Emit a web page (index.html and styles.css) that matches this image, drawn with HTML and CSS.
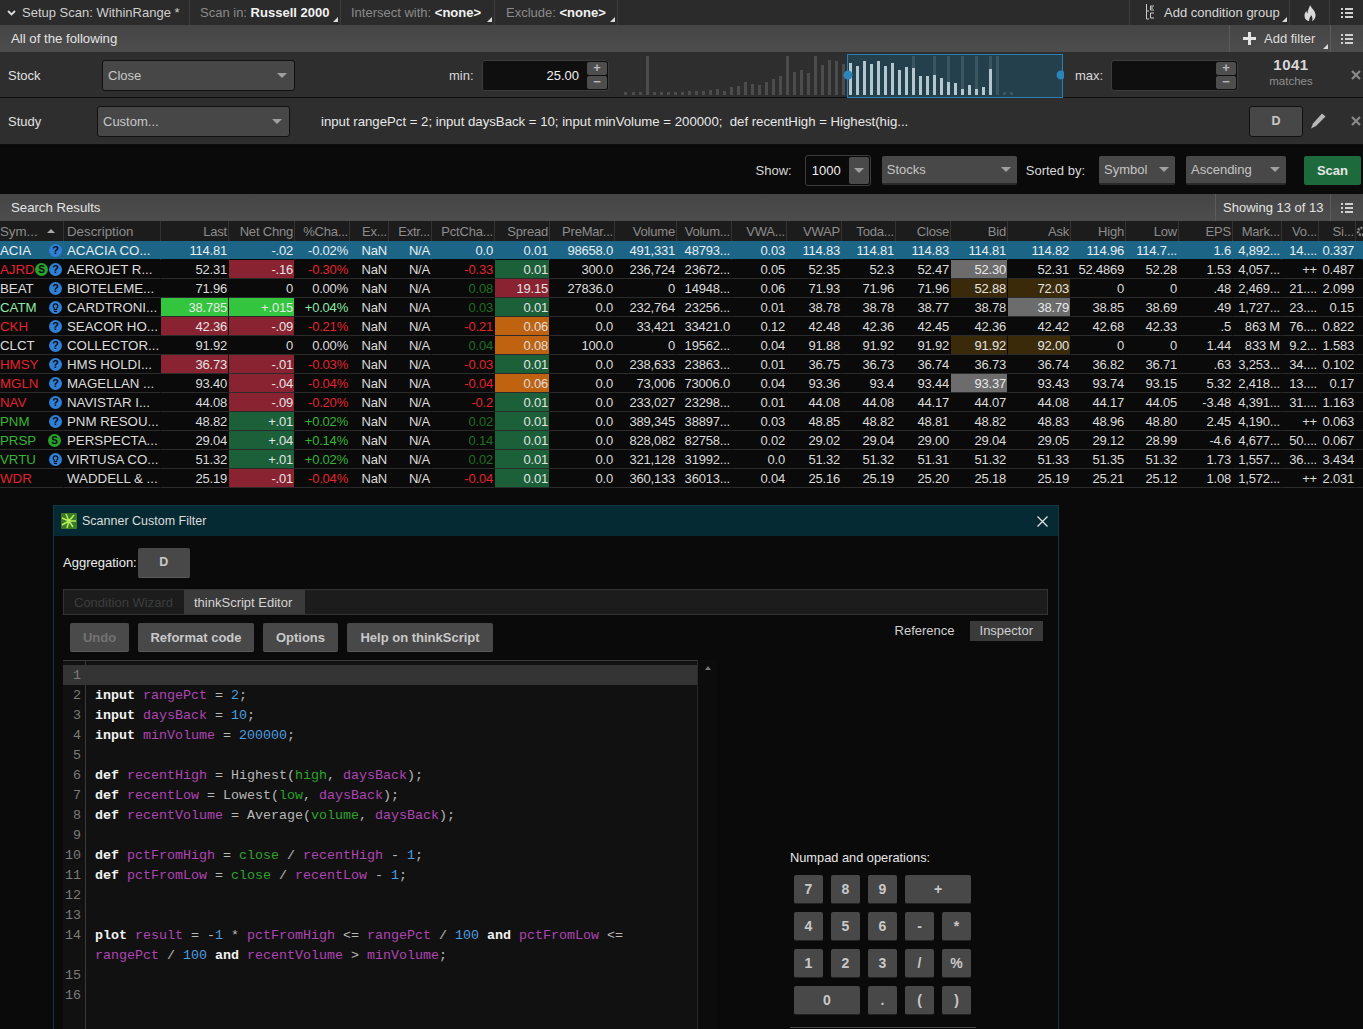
FILE: index.html
```html
<!DOCTYPE html>
<html>
  <head>
    <title>Scan - thinkScript custom filter</title>
    <link rel="stylesheet" href="styles.css">
  </head>

  <body>

    <svg class="icon-defs" width="0" height="0">
      <symbol id="list" viewBox="0 0 12 12">
        <path d="M0 1h2v2H0zM4 1h8v2H4zM0 5h2v2H0zM4 5h8v2H4zM0 9h2v2H0zM4 9h8v2H4z" fill="#d0d0d0"/>
      </symbol>
      <symbol id="close" viewBox="0 0 10 10">
        <path d="M1 1l8 8M9 1l-8 8" stroke="#8a8a8a" stroke-width="2.2" fill="none"/>
      </symbol>
      <symbol id="bulb" viewBox="0 0 13 13">
        <circle cx="6.5" cy="6.5" r="6.5" fill="#2f80d8"/>
        <path d="M6.5 2.2a3 3 0 0 1 1.7 5.4v1.6H4.800V7.600A3 3 0 0 1 6.500 2.200z" fill="#0a0a0a"/>
        <path d="M6.500 3.500a1.700 1.700 0 0 1 .8 3.200v1.300H5.700V6.700a1.700 1.700 0 0 1 .8-3.200z" fill="#2f80d8"/>
        <path d="M5 10h3v1H5z" fill="#0a0a0a"/>
      </symbol>
    </svg>

    <div class="toolbar">
      <div class="tb-item tb-setup">
        <svg class="chev" width="9" height="6" viewBox="0 0 9 6"><path d="M1 1l3.500 3.500L8 1" stroke="#ddd" stroke-width="1.800" fill="none"/></svg>
        <span>Setup Scan: WithinRange *</span>
      </div>
      <div class="tb-item tb-scan corner"><span><span class="dim">Scan in:</span> <b>Russell 2000</b></span></div>
      <div class="tb-item tb-intersect corner"><span><span class="dim">Intersect with:</span> <b>&lt;none&gt;</b></span></div>
      <div class="tb-item tb-exclude corner"><span><span class="dim">Exclude:</span> <b>&lt;none&gt;</b></span></div>
      <div class="tb-item tb-group corner">
        <svg width="10" height="17" viewBox="0 0 10 17"><path d="M1.500 0v15H4M1.500 7H4" stroke="#ccc" fill="none"/><path d="M9 2H5.500v4H9M5.500 4H8M9 9H5.500v5H9" stroke="#ccc" fill="none"/></svg>
        <span>Add condition group</span>
      </div>
      <div class="tb-item tb-flame">
        <svg width="12" height="16" viewBox="0 0 12 16"><path d="M6 0c1 3 5 5 5.500 9.500C12 13 9.500 16 8 16c1-2 .5-4-1-6-.5 2-1 2-1.500 3.500C5 15 5 15.500 5.300 16 2.500 16 .500 13.500.500 10.500c0-2 1-3.500 2-4.500 0 1.200.3 2 1 2.500C3.500 5 5.500 3 6 0z" fill="#d8d8d8"/></svg>
      </div>
      <div class="tb-item tb-list"><svg width="12" height="12"><use href="#list"/></svg></div>
    </div>

    <div class="subbar">
      <span class="subbar-title">All of the following</span>
      <div class="sub-item sub-add corner">
        <svg width="13" height="13" viewBox="0 0 13 13"><path d="M5 0h3v5h5v3H8v5H5V8H0V5h5z" fill="#e4e4e4"/></svg>
        <span>Add filter</span>
      </div>
      <div class="sub-item sub-list"><svg width="12" height="12"><use href="#list"/></svg></div>
    </div>

    <div class="filter-row stock-row">
      <span class="filter-label stock-label">Stock</span>
      <div class="dropdown close-select"><span>Close</span><i class="arrow"></i></div>
      <span class="min-label">min:</span>
      <div class="num-input min-input">
        <span class="num-value">25.00</span>
        <div class="spin"><span>+</span><span>&minus;</span></div>
      </div>
      <svg class="histogram" width="444" height="44" viewBox="0 0 444 44">
        <g fill="#4c4c4c">
          <rect x="4" y="38" width="3" height="3"/><rect x="12" y="38" width="3" height="3"/><rect x="19" y="38" width="3" height="3"/>
          <rect x="26" y="2" width="3" height="39"/>
          <rect x="33" y="38" width="3" height="3"/><rect x="40" y="38" width="3" height="3"/><rect x="47" y="38" width="3" height="3"/><rect x="54" y="38" width="3" height="3"/>
          <rect x="61" y="38" width="3" height="3"/><rect x="68" y="37" width="3" height="4"/><rect x="75" y="37" width="3" height="4"/><rect x="82" y="37" width="3" height="4"/>
          <rect x="89" y="36" width="3" height="5"/><rect x="96" y="35" width="3" height="6"/><rect x="103" y="37" width="3" height="4"/><rect x="110" y="33" width="3" height="8"/>
          <rect x="117" y="32" width="3" height="9"/><rect x="124" y="28" width="3" height="13"/><rect x="131" y="30" width="3" height="11"/><rect x="138" y="31" width="3" height="10"/>
          <rect x="145" y="28" width="3" height="13"/><rect x="152" y="25" width="3" height="16"/><rect x="159" y="22" width="3" height="19"/><rect x="166" y="2" width="3" height="39"/>
          <rect x="173" y="18" width="3" height="23"/><rect x="180" y="16" width="3" height="25"/><rect x="187" y="19" width="3" height="22"/><rect x="194" y="2" width="3" height="39"/>
          <rect x="201" y="11" width="3" height="30"/><rect x="208" y="6" width="3" height="35"/><rect x="215" y="7" width="3" height="34"/><rect x="222" y="10" width="3" height="31"/>
        </g>
        <rect x="227.500" y="0.500" width="215" height="43" fill="#24404d" stroke="#2a7fae"/>
        <g fill="#3a5663">
          <rect x="292" y="2" width="3" height="39"/><rect x="313" y="2" width="3" height="39"/><rect x="327" y="2" width="3" height="39"/><rect x="341" y="2" width="3" height="39"/>
          <rect x="355" y="2" width="3" height="39"/><rect x="369" y="2" width="3" height="39"/><rect x="376" y="2" width="3" height="39"/>
          <rect x="383" y="38" width="3" height="3"/><rect x="390" y="38" width="3" height="3"/>
        </g>
        <g fill="#b4c6ce">
          <rect x="229" y="9" width="3" height="32"/><rect x="236" y="12" width="3" height="29"/><rect x="243" y="7" width="3" height="34"/><rect x="250" y="10" width="3" height="31"/>
          <rect x="257" y="7" width="3" height="34"/><rect x="264" y="12" width="3" height="29"/><rect x="271" y="9" width="3" height="32"/><rect x="278" y="16" width="3" height="25"/>
          <rect x="285" y="13" width="3" height="28"/><rect x="292" y="14" width="3" height="27"/><rect x="299" y="22" width="3" height="19"/><rect x="306" y="22" width="3" height="19"/>
          <rect x="313" y="21" width="3" height="20"/><rect x="320" y="24" width="3" height="17"/><rect x="327" y="28" width="3" height="13"/><rect x="334" y="29" width="3" height="12"/>
          <rect x="341" y="35" width="3" height="6"/><rect x="348" y="31" width="3" height="10"/><rect x="355" y="35" width="3" height="6"/><rect x="362" y="33" width="3" height="8"/>
          <rect x="369" y="15" width="3" height="26"/>
        </g>
        <circle cx="228" cy="21" r="4.500" fill="#2a85bb"/>
        <circle cx="441" cy="21" r="4.500" fill="#2a85bb"/>
      </svg>
      <span class="max-label">max:</span>
      <div class="num-input max-input">
        <span class="num-value"></span>
        <div class="spin"><span>+</span><span>&minus;</span></div>
      </div>
      <div class="match-count"><b>1041</b><span>matches</span></div>
      <svg class="row-close" width="10" height="10"><use href="#close"/></svg>
    </div>

    <div class="filter-row study-row">
      <span class="filter-label study-label">Study</span>
      <div class="dropdown custom-select"><span>Custom...</span><i class="arrow"></i></div>
      <span class="study-text">input rangePct = 2; input daysBack = 10; input minVolume = 200000;&nbsp; def recentHigh = Highest(hig...</span>
      <div class="dropdown d-button">D</div>
      <svg class="pencil" width="16" height="16" viewBox="0 0 16 16"><path d="M12 .500l3.500 3L6 13 1 15.500 3 10.500z" fill="#b8b8b8"/></svg>
      <svg class="row-close" width="10" height="10"><use href="#close"/></svg>
    </div>

    <div class="show-row">
      <span>Show:</span>
      <div class="show-input"><span>1000</span><div class="show-btn"><i class="arrow"></i></div></div>
      <div class="pick pick-stocks"><span>Stocks</span><i class="arrow"></i></div>
      <span class="sorted-label">Sorted by:</span>
      <div class="pick pick-symbol"><span>Symbol</span><i class="arrow"></i></div>
      <div class="pick pick-order"><span>Ascending</span><i class="arrow"></i></div>
      <div class="scan-btn">Scan</div>
    </div>

    <div class="results-bar">
      <span class="subbar-title">Search Results</span>
      <div class="sub-item sub-showing">Showing 13 of 13</div>
      <div class="sub-item sub-list"><svg width="12" height="12"><use href="#list"/></svg></div>
    </div>

    <table class="results">
      <colgroup>
        <col style="width:64px"><col style="width:97px"><col style="width:68px"><col style="width:66px"><col style="width:55px">
        <col style="width:39px"><col style="width:43px"><col style="width:63px"><col style="width:55px"><col style="width:65px">
        <col style="width:62px"><col style="width:55px"><col style="width:55px"><col style="width:55px"><col style="width:54px">
        <col style="width:55px"><col style="width:57px"><col style="width:63px"><col style="width:55px"><col style="width:53px">
        <col style="width:54px"><col style="width:49px"><col style="width:37px"><col style="width:37px"><col style="width:7px">
      </colgroup>
      <thead>
        <tr>
          <th class="left"><div class="sym-cell">Sym...<i class="sort"></i></div></th><th class="left">Description</th><th>Last</th><th>Net Chng</th><th>%Cha...</th><th>Ex...</th><th>Extr...</th><th>PctCha...</th><th>Spread</th><th>PreMar...</th><th>Volume</th><th>Volum...</th><th>VWA...</th><th>VWAP</th><th>Toda...</th><th>Close</th><th>Bid</th><th>Ask</th><th>High</th><th>Low</th><th>EPS</th><th>Mark...</th><th>Vo...</th><th>Si...</th><th class="gear"><svg width="7" height="11" viewBox="0 0 7 11"><circle cx="5.500" cy="5.500" r="3.500" fill="none" stroke="#888" stroke-width="2.500" stroke-dasharray="2 1"/></svg></th>
        </tr>
      </thead>
      <tbody>
        <tr class="selected">
          <td class="left"><div class="sym-cell">ACIA<span class="badges"><span class="q">?</span></span></div></td><td class="left">ACACIA CO...</td><td>114.81</td><td>-.02</td><td>-0.02%</td><td>NaN</td><td>N/A</td><td>0.0</td><td>0.01</td><td>98658.0</td><td>491,331</td><td>48793...</td><td>0.03</td><td>114.83</td><td>114.81</td><td>114.83</td><td>114.81</td><td>114.82</td><td>114.96</td><td>114.7...</td><td>1.6</td><td>4,892...</td><td>14....</td><td>0.337</td><td></td>
        </tr>
        <tr>
          <td class="left red"><div class="sym-cell">AJRD<span class="badges"><span class="s">S</span><span class="q">?</span></span></div></td><td class="left">AEROJET R...</td><td>52.31</td><td class="bg-red">-.16</td><td class="red">-0.30%</td><td>NaN</td><td>N/A</td><td class="red">-0.33</td><td class="bg-green">0.01</td><td>300.0</td><td>236,724</td><td>23672...</td><td>0.05</td><td>52.35</td><td>52.3</td><td>52.47</td><td class="bg-grey">52.30</td><td>52.31</td><td>52.4869</td><td>52.28</td><td>1.53</td><td>4,057...</td><td>++</td><td>0.487</td><td></td>
        </tr>
        <tr>
          <td class="left"><div class="sym-cell">BEAT<span class="badges"><span class="q">?</span></span></div></td><td class="left">BIOTELEME...</td><td>71.96</td><td>0</td><td>0.00%</td><td>NaN</td><td>N/A</td><td class="dim-green">0.08</td><td class="bg-red">19.15</td><td>27836.0</td><td>0</td><td>14948...</td><td>0.06</td><td>71.93</td><td>71.96</td><td>71.96</td><td class="bg-brown">52.88</td><td class="bg-brown">72.03</td><td>0</td><td>0</td><td>.48</td><td>2,469...</td><td>21....</td><td>2.099</td><td></td>
        </tr>
        <tr>
          <td class="left pale"><div class="sym-cell">CATM<span class="badges"><svg width="13" height="13"><use href="#bulb"/></svg></span></div></td><td class="left">CARDTRONI...</td><td class="bg-bright">38.785</td><td class="bg-bright">+.015</td><td class="pale">+0.04%</td><td>NaN</td><td>N/A</td><td class="dim-green">0.03</td><td class="bg-green">0.01</td><td>0.0</td><td>232,764</td><td>23256...</td><td>0.01</td><td>38.78</td><td>38.78</td><td>38.77</td><td>38.78</td><td class="bg-grey">38.79</td><td>38.85</td><td>38.69</td><td>.49</td><td>1,727...</td><td>23....</td><td>0.15</td><td></td>
        </tr>
        <tr>
          <td class="left red"><div class="sym-cell">CKH<span class="badges"><span class="q">?</span></span></div></td><td class="left">SEACOR HO...</td><td class="bg-red">42.36</td><td class="bg-red">-.09</td><td class="red">-0.21%</td><td>NaN</td><td>N/A</td><td class="red">-0.21</td><td class="bg-orange">0.06</td><td>0.0</td><td>33,421</td><td>33421.0</td><td>0.12</td><td>42.48</td><td>42.36</td><td>42.45</td><td>42.36</td><td>42.42</td><td>42.68</td><td>42.33</td><td>.5</td><td>863 M</td><td>76....</td><td>0.822</td><td></td>
        </tr>
        <tr>
          <td class="left"><div class="sym-cell">CLCT<span class="badges"><span class="q">?</span></span></div></td><td class="left">COLLECTOR...</td><td>91.92</td><td>0</td><td>0.00%</td><td>NaN</td><td>N/A</td><td class="dim-green">0.04</td><td class="bg-orange">0.08</td><td>100.0</td><td>0</td><td>19562...</td><td>0.04</td><td>91.88</td><td>91.92</td><td>91.92</td><td class="bg-brown">91.92</td><td class="bg-brown">92.00</td><td>0</td><td>0</td><td>1.44</td><td>833 M</td><td>9.2...</td><td>1.583</td><td></td>
        </tr>
        <tr>
          <td class="left red"><div class="sym-cell">HMSY<span class="badges"><span class="q">?</span></span></div></td><td class="left">HMS HOLDI...</td><td class="bg-red">36.73</td><td class="bg-red">-.01</td><td class="red">-0.03%</td><td>NaN</td><td>N/A</td><td class="red">-0.03</td><td class="bg-green">0.01</td><td>0.0</td><td>238,633</td><td>23863...</td><td>0.01</td><td>36.75</td><td>36.73</td><td>36.74</td><td>36.73</td><td>36.74</td><td>36.82</td><td>36.71</td><td>.63</td><td>3,253...</td><td>34....</td><td>0.102</td><td></td>
        </tr>
        <tr>
          <td class="left red"><div class="sym-cell">MGLN<span class="badges"><span class="q">?</span></span></div></td><td class="left">MAGELLAN ...</td><td>93.40</td><td class="bg-red">-.04</td><td class="red">-0.04%</td><td>NaN</td><td>N/A</td><td class="red">-0.04</td><td class="bg-orange">0.06</td><td>0.0</td><td>73,006</td><td>73006.0</td><td>0.04</td><td>93.36</td><td>93.4</td><td>93.44</td><td class="bg-grey">93.37</td><td>93.43</td><td>93.74</td><td>93.15</td><td>5.32</td><td>2,418...</td><td>13....</td><td>0.17</td><td></td>
        </tr>
        <tr>
          <td class="left red"><div class="sym-cell">NAV<span class="badges"><span class="q">?</span></span></div></td><td class="left">NAVISTAR I...</td><td>44.08</td><td class="bg-red">-.09</td><td class="red">-0.20%</td><td>NaN</td><td>N/A</td><td class="red">-0.2</td><td class="bg-green">0.01</td><td>0.0</td><td>233,027</td><td>23298...</td><td>0.01</td><td>44.08</td><td>44.08</td><td>44.17</td><td>44.07</td><td>44.08</td><td>44.17</td><td>44.05</td><td>-3.48</td><td>4,391...</td><td>31....</td><td>1.163</td><td></td>
        </tr>
        <tr>
          <td class="left green"><div class="sym-cell">PNM<span class="badges"><span class="q">?</span></span></div></td><td class="left">PNM RESOU...</td><td>48.82</td><td class="bg-green">+.01</td><td class="green">+0.02%</td><td>NaN</td><td>N/A</td><td class="dim-green">0.02</td><td class="bg-green">0.01</td><td>0.0</td><td>389,345</td><td>38897...</td><td>0.03</td><td>48.85</td><td>48.82</td><td>48.81</td><td>48.82</td><td>48.83</td><td>48.96</td><td>48.80</td><td>2.45</td><td>4,190...</td><td>++</td><td>0.063</td><td></td>
        </tr>
        <tr>
          <td class="left green"><div class="sym-cell">PRSP<span class="badges"><span class="s">S</span></span></div></td><td class="left">PERSPECTA...</td><td>29.04</td><td class="bg-green">+.04</td><td class="green">+0.14%</td><td>NaN</td><td>N/A</td><td class="dim-green">0.14</td><td class="bg-green">0.01</td><td>0.0</td><td>828,082</td><td>82758...</td><td>0.02</td><td>29.02</td><td>29.04</td><td>29.00</td><td>29.04</td><td>29.05</td><td>29.12</td><td>28.99</td><td>-4.6</td><td>4,677...</td><td>50....</td><td>0.067</td><td></td>
        </tr>
        <tr>
          <td class="left green"><div class="sym-cell">VRTU<span class="badges"><svg width="13" height="13"><use href="#bulb"/></svg></span></div></td><td class="left">VIRTUSA CO...</td><td>51.32</td><td class="bg-green">+.01</td><td class="green">+0.02%</td><td>NaN</td><td>N/A</td><td class="dim-green">0.02</td><td class="bg-green">0.01</td><td>0.0</td><td>321,128</td><td>31992...</td><td>0.0</td><td>51.32</td><td>51.32</td><td>51.31</td><td>51.32</td><td>51.33</td><td>51.35</td><td>51.32</td><td>1.73</td><td>1,557...</td><td>36....</td><td>3.434</td><td></td>
        </tr>
        <tr>
          <td class="left red"><div class="sym-cell">WDR</div></td><td class="left">WADDELL &amp; ...</td><td>25.19</td><td class="bg-red">-.01</td><td class="red">-0.04%</td><td>NaN</td><td>N/A</td><td class="red">-0.04</td><td class="bg-green">0.01</td><td>0.0</td><td>360,133</td><td>36013...</td><td>0.04</td><td>25.16</td><td>25.19</td><td>25.20</td><td>25.18</td><td>25.19</td><td>25.21</td><td>25.12</td><td>1.08</td><td>1,572...</td><td>++</td><td>2.031</td><td></td>
        </tr>
      </tbody>
    </table>

    <div class="dialog">
      <div class="dialog-title">
        <svg width="16" height="16" viewBox="0 0 16 16">
          <rect width="16" height="16" rx="1" fill="#3c7a26"/>
          <path d="M8 8L5 1M8 8l5-6M8 8h7M8 8l4 6M8 8l-2 7M8 8l-7 4M8 8L1 5" stroke="#b6ee5a" stroke-width="1.500"/>
        </svg>
        <span>Scanner Custom Filter</span>
        <svg class="dialog-close" width="11" height="11" viewBox="0 0 11 11"><path d="M.500.500l10 10M10.500.500l-10 10" stroke="#e0e0e0" stroke-width="1.300"/></svg>
      </div>

      <div class="dialog-body">
        <div class="aggregation">
          <span class="agg-label">Aggregation:</span>
          <div class="btn agg-btn">D</div>
        </div>

        <div class="tabs">
          <div class="tab tab-off">Condition Wizard</div>
          <div class="tab tab-on">thinkScript Editor</div>
        </div>

        <div class="editor-area">
          <div class="editor-col">
            <div class="actions">
              <div class="btn btn-off">Undo</div>
              <div class="btn">Reformat code</div>
              <div class="btn">Options</div>
              <div class="btn">Help on thinkScript</div>
            </div>

            <div class="editor">
              <div class="code">
                <div class="code-line current"><span class="ln">1</span></div>
                <div class="code-line"><span class="ln">2</span><span><b>input</b> <i class="v">rangePct</i> = <i class="n">2</i>;</span></div>
                <div class="code-line"><span class="ln">3</span><span><b>input</b> <i class="v">daysBack</i> = <i class="n">10</i>;</span></div>
                <div class="code-line"><span class="ln">4</span><span><b>input</b> <i class="v">minVolume</i> = <i class="n">200000</i>;</span></div>
                <div class="code-line"><span class="ln">5</span></div>
                <div class="code-line"><span class="ln">6</span><span><b>def</b> <i class="v">recentHigh</i> = Highest(<i class="p">high</i>, <i class="v">daysBack</i>);</span></div>
                <div class="code-line"><span class="ln">7</span><span><b>def</b> <i class="v">recentLow</i> = Lowest(<i class="p">low</i>, <i class="v">daysBack</i>);</span></div>
                <div class="code-line"><span class="ln">8</span><span><b>def</b> <i class="v">recentVolume</i> = Average(<i class="p">volume</i>, <i class="v">daysBack</i>);</span></div>
                <div class="code-line"><span class="ln">9</span></div>
                <div class="code-line"><span class="ln">10</span><span><b>def</b> <i class="v">pctFromHigh</i> = <i class="p">close</i> / <i class="v">recentHigh</i> - <i class="n">1</i>;</span></div>
                <div class="code-line"><span class="ln">11</span><span><b>def</b> <i class="v">pctFromLow</i> = <i class="p">close</i> / <i class="v">recentLow</i> - <i class="n">1</i>;</span></div>
                <div class="code-line"><span class="ln">12</span></div>
                <div class="code-line"><span class="ln">13</span></div>
                <div class="code-line"><span class="ln">14</span><span><b>plot</b> <i class="v">result</i> = -<i class="n">1</i> * <i class="v">pctFromHigh</i> &lt;= <i class="v">rangePct</i> / <i class="n">100</i> <b>and</b> <i class="v">pctFromLow</i> &lt;=</span></div>
                <div class="code-line"><span class="ln"></span><span><i class="v">rangePct</i> / <i class="n">100</i> <b>and</b> <i class="v">recentVolume</i> &gt; <i class="v">minVolume</i>;</span></div>
                <div class="code-line"><span class="ln">15</span></div>
                <div class="code-line"><span class="ln">16</span></div>
              </div>
              <div class="scrollbar"><i class="scroll-up"></i></div>
            </div>
          </div>

          <div class="side-col">
            <div class="side-tabs">
              <span class="side-tab">Reference</span>
              <span class="side-tab side-on">Inspector</span>
            </div>
            <div class="numpad">
              <div class="numpad-title">Numpad and operations:</div>
              <div class="keys">
                <div class="btn key">7</div><div class="btn key">8</div><div class="btn key">9</div><div class="btn key wide">+</div>
                <div class="btn key">4</div><div class="btn key">5</div><div class="btn key">6</div><div class="btn key">-</div><div class="btn key">*</div>
                <div class="btn key">1</div><div class="btn key">2</div><div class="btn key">3</div><div class="btn key">/</div><div class="btn key">%</div>
                <div class="btn key wide">0</div><div class="btn key">.</div><div class="btn key">(</div><div class="btn key">)</div>
              </div>
              <div class="numpad-rule"></div>
            </div>
          </div>
        </div>
      </div>
    </div>

  </body>
</html>
```

FILE: styles.css
```css
html, body {
  margin: 0;
  height: 1029px;
  overflow: hidden;
}

body {
  background-color: #0a0a0a;
  font-family: "Liberation Sans", Arial, sans-serif;
  font-size: 13px;
  color: #d8d8d8;
}

.icon-defs {
  display: block;
  height: 0;
}

/* top toolbar */
.toolbar {
  display: flex;
  height: 25px;
  background-color: #2b2b2b;
}

.tb-item {
  display: flex;
  align-items: center;
  gap: 4px;
  position: relative;
  border-right: 1px solid #3e3e3e;
  box-sizing: border-box;
  white-space: nowrap;
}

.tb-setup { width: 190px; padding-left: 7px; color: #cfcfcf; }
.tb-scan { width: 151px; padding-left: 10px; }
.tb-intersect { width: 154px; padding-left: 10px; }
.tb-exclude { width: 123px; padding-left: 11px; }
.tb-group { width: 161px; margin-left: auto; padding-left: 15px; border-left: 1px solid #3e3e3e; gap: 9px; }
.tb-flame { width: 40px; justify-content: center; }
.tb-list { width: 33px; justify-content: center; border-right: none; }

.tb-item b { color: #f2f2f2; }
.dim { color: #8a8a8a; }
.chev { margin-right: 2px; }

.corner::after {
  content: "";
  position: absolute;
  right: 2px;
  bottom: 3px;
  border-left: 5px solid transparent;
  border-bottom: 5px solid #dcdcdc;
}

.subbar, .results-bar {
  display: flex;
  align-items: center;
  height: 27px;
  background: linear-gradient(#454545, #4d4d4d);
}

.subbar-title {
  margin-left: 11px;
  margin-right: auto;
  color: #e4e4e4;
  font-size: 13.200px;
}

.sub-item {
  display: flex;
  align-items: center;
  height: 100%;
  position: relative;
  box-sizing: border-box;
  border-left: 1px solid #5c5c5c;
  white-space: nowrap;
}

.sub-add { width: 101px; padding-left: 13px; gap: 8px; color: #dedede; }
.sub-list { width: 33px; justify-content: center; }
.sub-showing { width: 115px; padding-left: 7px; color: #e4e4e4; }

/* filter rows */
.filter-row {
  display: flex;
  align-items: center;
  background-color: #2e2e2e;
  border-bottom: 1px solid #0d0d0d;
  box-sizing: border-box;
}

.stock-row { height: 46px; padding-top: 1px; }
.study-row { height: 47px; }

.filter-label { margin-left: 8px; color: #e0e0e0; }
.stock-label { width: 94px; }
.study-label { width: 89px; }

.dropdown {
  display: flex;
  align-items: center;
  justify-content: space-between;
  box-sizing: border-box;
  height: 31px;
  padding: 0 7px 0 5px;
  background-color: #474747;
  border: 1px solid #111;
  border-radius: 3px;
  color: #c8c8c8;
}

.close-select, .custom-select { width: 193px; }

.arrow {
  display: block;
  border-left: 5px solid transparent;
  border-right: 5px solid transparent;
  border-top: 5px solid #a0a0a0;
}

.min-label { margin-left: 154px; width: 33px; }

.num-input {
  display: flex;
  align-items: center;
  justify-content: flex-end;
  box-sizing: border-box;
  height: 31px;
  background-color: #0f0f0f;
  border: 1px solid #3c3c3c;
  border-radius: 3px;
  padding-right: 1px;
}

.min-input { width: 127px; }
.max-input { width: 127px; }
.num-value { margin-right: 8px; color: #f0f0f0; }

.spin {
  display: flex;
  flex-direction: column;
  gap: 1px;
}

.spin span {
  display: block;
  width: 20px;
  height: 13px;
  line-height: 12px;
  text-align: center;
  font-weight: bold;
  font-size: 13px;
  background-color: #4e4e4e;
  color: #b8b8b8;
  border-radius: 2px;
}

.histogram { margin-left: 11px; margin-top: 2px; flex: none; }
.max-label { margin-left: 11px; width: 36px; }

.match-count {
  display: flex;
  flex-direction: column;
  align-items: center;
  width: 106px;
  margin-top: -8px;
  flex: none;
}

.match-count b { font-size: 15px; letter-spacing: .5px; color: #d8d8d8; }
.match-count span { font-size: 11.500px; color: #8f8f8f; margin-top: 2px; }

.row-close { flex: none; margin-left: 7px; }

.study-text { margin-left: 31px; width: 928px; color: #e8e8e8; white-space: nowrap; font-size: 13.200px; }
.d-button { width: 54px; justify-content: center; padding: 0; font-weight: bold; font-size: 12.500px; margin-left: 0; flex: none; }
.pencil { margin-left: 7px; flex: none; }
.study-row .row-close { margin-left: 0; }
.study-row .pencil { margin-right: 25px; }

/* show row */
.show-row {
  display: flex;
  align-items: center;
  justify-content: flex-end;
  height: 49px;
  padding-right: 2px;
  padding-top: 2px;
  box-sizing: border-box;
  color: #d8d8d8;
}

.show-input {
  display: flex;
  align-items: center;
  justify-content: space-between;
  box-sizing: border-box;
  width: 66px;
  height: 31px;
  margin-left: 13px;
  padding-left: 6px;
  border: 1px solid #3c3c3c;
  border-radius: 3px;
  color: #eee;
}

.show-btn {
  display: flex;
  align-items: center;
  justify-content: center;
  width: 20px;
  height: 27px;
  margin-right: 1px;
  background-color: #4a4a4a;
  border-radius: 2px;
}

.pick {
  display: flex;
  align-items: center;
  justify-content: space-between;
  box-sizing: border-box;
  height: 29px;
  padding: 0 6px 0 5px;
  background-color: #484848;
  border-bottom: 2px solid #2a2a2a;
  border-radius: 2px;
  color: #c4c4c4;
}

.pick-stocks { width: 135px; margin-left: 11px; }
.pick-symbol { width: 76px; margin-left: 14px; }
.pick-order { width: 100px; margin-left: 11px; }
.sorted-label { margin-left: 9px; }

.scan-btn {
  width: 57px;
  height: 29px;
  line-height: 29px;
  margin-left: 18px;
  text-align: center;
  font-weight: bold;
  background-color: #1d6b3d;
  border-radius: 2px;
  color: #e6e6e6;
}

.results-bar { height: 27px; margin-top: 0; }

/* results table */
.results {
  table-layout: fixed;
  width: 1363px;
  border-collapse: separate;
  border-spacing: 0;
  font-size: 13px;
  letter-spacing: -.2px;
}

.results th, .results td {
  height: 18px;
  padding: 0 1px 0 0;
  text-align: right;
  white-space: nowrap;
  overflow: hidden;
  box-sizing: content-box;
}

.results th {
  height: 20px;
  font-weight: normal;
  color: #8c8c8c;
  background-color: #1c1c1c;
  border-right: 1px solid #333;
}

.results td {
  color: #dcdcdc;
  border-right: 1px solid #0a0a0a;
  border-bottom: 1px solid #2c2c2c;
}

.results th.left, .results td.left {
  text-align: left;
  padding-left: 3px;
  padding-right: 0;
  font-size: 13.300px;
  letter-spacing: 0;
}

.results .sym-cell {
  display: flex;
  align-items: center;
  margin-left: -3px;
}

.results .gear { padding: 0; border-right: none; line-height: 0; }

.sort {
  display: block;
  margin-left: 9px;
  border-left: 4px solid transparent;
  border-right: 4px solid transparent;
  border-bottom: 4px solid #aaa;
}

.badges {
  display: flex;
  margin-left: auto;
  margin-right: 1px;
}

.q, .s {
  display: block;
  width: 13px;
  height: 13px;
  line-height: 13px;
  border-radius: 50%;
  text-align: center;
  font-size: 11px;
  font-weight: bold;
  letter-spacing: 0;
  color: #0a0a0a;
}

.q { background-color: #2f80d8; }
.s { background-color: #25a32e; margin-right: 1px; font-size: 10px; }

.results tr.selected td {
  background-color: #1c6587;
  border-right-color: #1c6587;
  border-bottom-color: #0a0a0a;
  color: #e8eef2;
}

.results td.red { color: #e2222e; }
.results td.green { color: #36b536; }
.results td.pale { color: #8de8a4; }
.results td.dim-green { color: #1f6f22; }
.results td.bg-red { background-color: #8a2331; color: #e4e4e4; }
.results td.bg-green { background-color: #1b6038; color: #e4e4e4; }
.results td.bg-bright { background-color: #33c53d; color: #e8e8e8; }
.results td.bg-orange { background-color: #bf6311; color: #dedede; }
.results td.bg-grey { background-color: #6c6c6c; color: #e8e8e8; }
.results td.bg-brown { background-color: #3a2a0a; color: #e4e4e4; }

/* dialog */
.dialog {
  width: 1006px;
  height: 524px;
  margin: 17px 0 0 53px;
  box-sizing: border-box;
  border: 1px solid #0f3a44;
  border-bottom: none;
  overflow: hidden;
}

.dialog-title {
  display: flex;
  align-items: center;
  gap: 5px;
  height: 30px;
  padding-left: 7px;
  background-color: #062a33;
  font-size: 12.500px;
  color: #dcdcdc;
}

.dialog-close { margin-left: auto; margin-right: 10px; }

.dialog-body { padding: 12px 10px 0 9px; }

.aggregation {
  display: flex;
  align-items: center;
  gap: 1px;
  color: #ececec;
}

.agg-label { padding-bottom: 2px; }

.btn {
  display: flex;
  align-items: center;
  justify-content: center;
  box-sizing: border-box;
  height: 29px;
  padding: 0 13px;
  background-color: #484848;
  border-bottom: 1px solid #5a5a5a;
  border-radius: 2px;
  font-weight: bold;
  color: #c8c8c8;
  font-size: 13px;
}

.agg-btn { width: 52px; height: 30px; padding: 0 0 2px; font-size: 12.500px; }

.tabs {
  display: flex;
  height: 26px;
  margin-top: 11px;
  box-sizing: border-box;
  background-color: #1c1c1c;
  border: 1px solid #333;
}

.tab { display: flex; align-items: center; padding: 0 10px; white-space: nowrap; box-sizing: border-box; }
.tab-off { width: 120px; color: #3c3c3c; }
.tab-on { background-color: #3a3a3a; color: #d4d4d4; width: 121px; }

.editor-area { display: flex; }

.editor-col { width: 654px; flex: none; }

.actions {
  display: flex;
  gap: 9px;
  margin: 8px 0 8px 7px;
}

.btn-off { width: 59px; color: #737373; background-color: #4a4a4a; }
.actions .btn:nth-child(2) { width: 116px; padding: 0; }
.actions .btn:nth-child(3) { width: 75px; padding: 0; }
.actions .btn:nth-child(4) { width: 146px; padding: 0; }

.editor { display: flex; height: 369px; }

.code {
  width: 634px;
  padding-top: 4px;
  box-sizing: border-box;
  background: linear-gradient(#3a3a3a, #3a3a3a) 22px 0 / 1px 100% no-repeat, #111;
  border-top: 1px solid #3a3a3a;
  font-family: "Liberation Mono", "Courier New", monospace;
  font-size: 13.330px;
  color: #b8b8b8;
}

.code-line {
  display: flex;
  height: 20px;
  line-height: 22px;
  white-space: pre;
}

.code-line.current { background-color: #343434; }

.ln {
  display: block;
  flex: none;
  width: 23px;
  height: 20px;
  margin-right: 9px;
  padding-right: 5px;
  box-sizing: border-box;
  text-align: right;
  color: #7c7c7c;
}

.code b { color: #f2f2f2; }
.code i { font-style: normal; }
.code .v { color: #b044b4; }
.code .n { color: #4a9fe0; }
.code .p { color: #2ba32b; }

.scrollbar {
  width: 20px;
  background-color: #0c0c0c;
  border-left: 1px solid #2a2a2a;
  box-sizing: border-box;
  padding-top: 6px;
}

.scroll-up {
  display: block;
  width: 0;
  margin: 0 auto;
  border-left: 3px solid transparent;
  border-right: 3px solid transparent;
  border-bottom: 4px solid #777;
}

.side-col { flex: 1; display: flex; flex-direction: column; }

.side-tabs {
  display: flex;
  justify-content: flex-end;
  align-items: center;
  gap: 5px;
  margin: 6px 5px 0 0;
}

.side-tab { padding: 0 10px; height: 20px; line-height: 20px; color: #d0d0d0; font-size: 13px; }
.side-on { background-color: #3a3a3a; }

.numpad { margin: 209px 0 0 73px; width: 186px; }
.numpad-title { font-size: 12.800px; color: #e6e6e6; margin-bottom: 10px; }

.keys {
  display: grid;
  grid-template-columns: repeat(5, 29px);
  grid-auto-rows: 29px;
  gap: 8px;
  margin-left: 4px;
}

.key { padding: 0; border-bottom-color: #222; font-size: 14px; }
.wide { grid-column: span 2; }

.numpad-rule { height: 1px; background-color: #444; margin-top: 12px; }
```
